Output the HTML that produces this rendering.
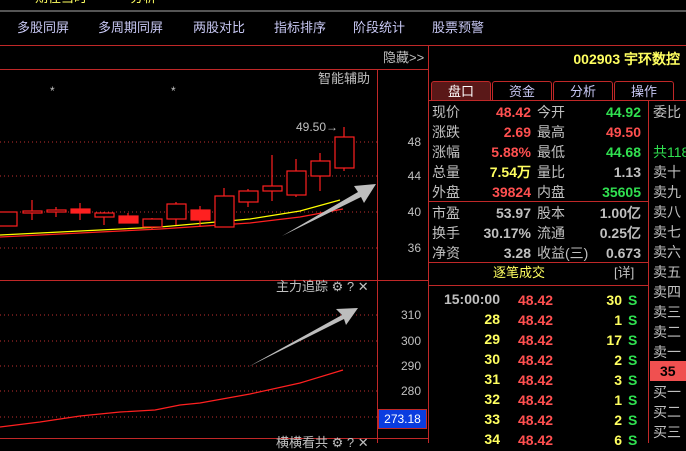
<!DOCTYPE html><html><head><meta charset="utf-8"><style>
body{margin:0;width:686px;height:443px;background:#000;overflow:hidden;position:relative;font-family:"Liberation Sans","Noto Sans CJK SC",sans-serif;font-size:13px}
.a{position:absolute;white-space:nowrap;line-height:16px}
.m{color:#c8c8f4;font-size:13px;top:20px}
.g{color:#c0c0c0}.r{color:#ff5050}.gr{color:#30e050}.y{color:#ffff60}
.n{font-family:"Liberation Sans",sans-serif;font-weight:bold}
.ln{position:absolute;background:#c02828}
.tab{position:absolute;top:81px;height:19px;width:58px;border:1px solid #c02828;border-bottom:none;border-radius:3px 3px 0 0;color:#c8c8f4;text-align:center;line-height:19px}
</style></head><body>
<div class="a y" style="left:35px;top:-10px">期径当时 &nbsp;&nbsp;&nbsp;&nbsp;&nbsp;&nbsp;&nbsp;&nbsp;&nbsp;&nbsp;&nbsp;分析</div>
<div style="position:absolute;left:0;top:10px;width:686px;height:2px;background:#555"></div>
<div class="a m" style="left:17px">多股同屏</div><div class="a m" style="left:98px">多周期同屏</div><div class="a m" style="left:193px">两股对比</div><div class="a m" style="left:274px">指标排序</div><div class="a m" style="left:353px">阶段统计</div><div class="a m" style="left:432px">股票预警</div>
<div class="ln" style="left:0;top:45px;width:686px;height:1px"></div>
<div class="ln" style="left:428px;top:45px;width:1px;height:398px"></div>
<div class="a g" style="left:383px;top:50px">隐藏>></div>
<div class="ln" style="left:0;top:69px;width:428px;height:1px"></div>
<div class="ln" style="left:377px;top:69px;width:1px;height:374px"></div>
<div class="ln" style="left:0;top:280px;width:428px;height:1px"></div>
<div class="ln" style="left:0;top:438px;width:428px;height:1px"></div>
<svg width="428" height="443" style="position:absolute;left:0;top:0">
<g stroke="#c03030" stroke-dasharray="1,3" stroke-width="1">
<line x1="0" y1="142" x2="377" y2="142"/><line x1="0" y1="176" x2="377" y2="176"/><line x1="0" y1="212" x2="377" y2="212"/><line x1="0" y1="248" x2="377" y2="248"/>
<line x1="0" y1="315" x2="377" y2="315"/><line x1="0" y1="341" x2="377" y2="341"/><line x1="0" y1="366" x2="377" y2="366"/><line x1="0" y1="391" x2="377" y2="391"/><line x1="0" y1="417" x2="377" y2="417"/></g>
<polyline points="0,235 80,231 160,227 250,219 300,211 340,200" fill="none" stroke="#ffff00" stroke-width="1.2"/>
<polyline points="0,237 80,233 160,229 250,223 300,217 343,209" fill="none" stroke="#ff2020" stroke-width="1.2"/>
<g stroke="#ff2020" fill="none" stroke-width="1.2">
<rect x="-1" y="212" width="18" height="14"/>
<line x1="32" y1="200" x2="32" y2="220"/><rect x="23" y="211" width="19" height="2" fill="#000"/>
<line x1="56" y1="207" x2="56" y2="217"/><rect x="47" y="210" width="19" height="2" fill="#000"/>
<line x1="80" y1="203" x2="80" y2="220"/><rect x="71" y="209" width="19" height="4" fill="#ff2020"/>
<line x1="104" y1="212" x2="104" y2="225"/><rect x="95" y="213" width="19" height="4" fill="#000"/>
<rect x="119" y="216" width="19" height="7" fill="#ff2020"/><line x1="128" y1="213" x2="128" y2="216"/>
<line x1="152" y1="218" x2="152" y2="229"/><rect x="143" y="219" width="19" height="8" fill="#000"/>
<line x1="176" y1="202" x2="176" y2="225"/><rect x="167" y="204" width="19" height="15" fill="#000"/>
<line x1="200" y1="206" x2="200" y2="227"/><rect x="191" y="210" width="19" height="10" fill="#ff2020"/>
<line x1="224" y1="188" x2="224" y2="196"/><rect x="215" y="196" width="19" height="31" fill="#000"/>
<line x1="248" y1="189" x2="248" y2="207"/><rect x="239" y="191" width="19" height="11" fill="#000"/>
<line x1="272" y1="155" x2="272" y2="201"/><rect x="263" y="186" width="19" height="5" fill="#000"/>
<line x1="296" y1="159" x2="296" y2="197"/><rect x="287" y="171" width="19" height="24" fill="#000"/>
<line x1="320" y1="153" x2="320" y2="191"/><rect x="311" y="161" width="19" height="15" fill="#000"/>
<line x1="344" y1="127" x2="344" y2="171"/><rect x="335" y="137" width="19" height="31" fill="#000"/>
</g>
<polygon points="282,236 358,192 354,186 376,184 364,203 361,197" fill="#bdbdbd"/>
<polygon points="248,367 342,315 336,309 358,308 346,325 344,319" fill="#bdbdbd"/>
<polyline points="0,427 40,422 80,416 120,412 155,410 180,405 200,403 250,394 300,383 343,370" fill="none" stroke="#ff2020" stroke-width="1.2"/>
</svg>
<div class="a g" style="left:50px;top:83px;font-size:12px">*</div><div class="a g" style="left:171px;top:83px;font-size:12px">*</div>
<div class="a g" style="left:318px;top:71px">智能辅助</div>
<div class="a g" style="left:296px;top:119px;font-size:12px">49.50→</div>
<div class="a g" style="right:265px;top:134px;font-size:12px">48</div>
<div class="a g" style="right:265px;top:168px;font-size:12px">44</div>
<div class="a g" style="right:265px;top:204px;font-size:12px">40</div>
<div class="a g" style="right:265px;top:240px;font-size:12px">36</div>
<div class="a g" style="left:276px;top:279px">主力追踪 ⚙ ? ✕</div>
<div class="a g" style="right:265px;top:307px;font-size:12px">310</div>
<div class="a g" style="right:265px;top:333px;font-size:12px">300</div>
<div class="a g" style="right:265px;top:358px;font-size:12px">290</div>
<div class="a g" style="right:265px;top:383px;font-size:12px">280</div>
<div style="position:absolute;left:378px;top:409px;width:47px;height:18px;background:#0a3ce0;border:1px solid #c02828;color:#fff;font-size:12px;text-align:center;line-height:18px">273.18</div>
<div class="a g" style="left:276px;top:435px">横横看共 ⚙ ? ✕</div>
<div class="a y n" style="right:6px;top:51px;font-size:14px">002903 宇环数控</div>
<div class="tab" style="left:431px;background:#5a1818;color:#fff">盘口</div>
<div class="tab" style="left:492px">资金</div><div class="tab" style="left:553px">分析</div><div class="tab" style="left:614px">操作</div>
<div class="ln" style="left:428px;top:100px;width:258px;height:1px"></div>
<div class="ln" style="left:648px;top:100px;width:1px;height:343px"></div>
<div class="ln" style="left:428px;top:201px;width:220px;height:1px"></div>
<div class="ln" style="left:428px;top:262px;width:220px;height:1px"></div>
<div class="ln" style="left:428px;top:285px;width:220px;height:1px"></div>
<div id="q"></div>
<script>
var rows=[["现价","48.42","r","今开","44.92","gr"],["涨跌","2.69","r","最高","49.50","r"],["涨幅","5.88%","r","最低","44.68","gr"],["总量","7.54万","y","量比","1.13","g"],["外盘","39824","r","内盘","35605","gr"],null,["市盈","53.97","g","股本","1.00亿","g"],["换手","30.17%","g","流通","0.25亿","g"],["净资","3.28","g","收益(三)","0.673","g"]];
var h="",y=104;
rows.forEach(function(r){if(!r){y+=1;return;}h+='<div class="a g" style="left:432px;top:'+y+'px;font-size:14px">'+r[0]+'</div><div class="a n '+r[2]+'" style="right:155px;top:'+y+'px;font-size:14px">'+r[1]+'</div><div class="a g" style="left:537px;top:'+y+'px;font-size:14px">'+r[3]+'</div><div class="a n '+r[5]+'" style="right:45px;top:'+y+'px;font-size:14px">'+r[4]+'</div>';y+=20;});
var f=["委比","","<span class=gr>共118</span>","卖十","卖九","卖八","卖七","卖六","卖五","卖四","卖三","卖二","卖一","","买一","买二","买三"];
f.forEach(function(t,i){if(t)h+='<div class="a g" style="left:653px;top:'+(104+i*20)+'px;font-size:14px">'+t+'</div>';});
h+='<div style="position:absolute;left:650px;top:361px;width:36px;height:20px;background:#f05050"></div><div class="a n" style="left:660px;top:363px;font-size:14px;color:#000">35</div>';
h+='<div class="a y" style="left:493px;top:265px">逐笔成交</div><div class="a g" style="left:614px;top:265px">[详]</div>';
var t=[["15:00:00","30"],["28","1"],["29","17"],["30","2"],["31","3"],["32","1"],["33","2"],["34","6"]];
t.forEach(function(r,i){var yy=291+i*20;h+='<div class="a n '+(i?"y":"g")+'" style="right:186px;top:'+yy+'px;font-size:14px">'+r[0]+'</div><div class="a n r" style="left:518px;top:'+(yy+1)+'px;font-size:14px">48.42</div><div class="a n y" style="right:64px;top:'+(yy+1)+'px;font-size:14px">'+r[1]+'</div><div class="a n gr" style="left:628px;top:'+(yy+1)+'px;font-size:14px">S</div>';});
document.getElementById("q").innerHTML=h;
</script>
</body></html>
